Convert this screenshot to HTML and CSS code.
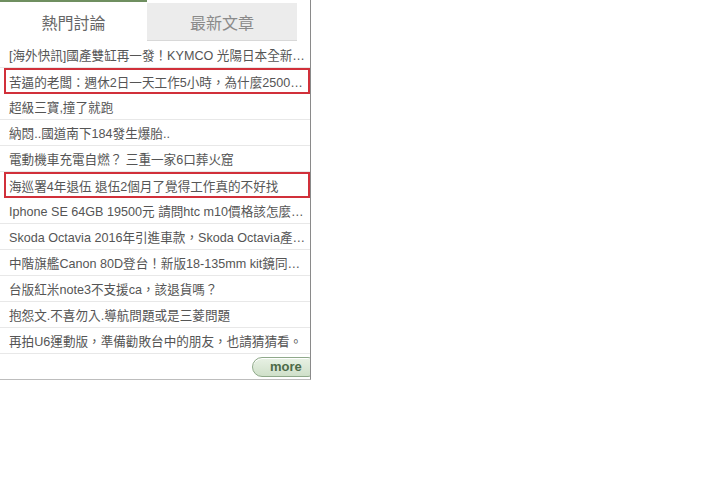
FILE: index.html
```html
<!DOCTYPE html>
<html lang="zh-Hant">
<head>
<meta charset="utf-8">
<link rel="stylesheet" href="styles.css">
</head>
<body>
<div class="box">
  <div class="tabs">
    <div class="tab active">熱門討論</div>
    <div class="tab">最新文章</div>
  </div>
  <ul class="list">
    <li><span>[海外快訊]國產雙缸再一發！KYMCO 光陽日本全新…</span></li>
    <li class="mark"><span>苦逼的老闆：週休2日一天工作5小時，為什麼2500…</span></li>
    <li><span>超級三寶,撞了就跑</span></li>
    <li><span>納悶..國道南下184發生爆胎..</span></li>
    <li><span>電動機車充電自燃？ 三重一家6口葬火窟</span></li>
    <li class="mark"><span>海巡署4年退伍 退伍2個月了覺得工作真的不好找</span></li>
    <li><span>Iphone SE 64GB 19500元 請問htc m10價格該怎麼…</span></li>
    <li><span>Skoda Octavia 2016年引進車款，Skoda Octavia產…</span></li>
    <li><span>中階旗艦Canon 80D登台！新版18-135mm kit鏡同…</span></li>
    <li><span>台版紅米note3不支援ca，該退貨嗎？</span></li>
    <li><span>抱怨文.不喜勿入.導航問題或是三菱問題</span></li>
    <li><span>再拍U6運動版，準備勸敗台中的朋友，也請猜猜看。</span></li>
  </ul>
  <div class="foot"><a class="more" href="#">more</a></div>
</div>
</body>
</html>
```
FILE: styles.css
```css
html, body {
  margin: 0;
  padding: 0;
  background: #fff;
}
body {
  font-family: "Liberation Sans", "Noto Sans CJK TC", sans-serif;
}
.box {
  width: 310px;
  border-right: 1px solid #8a8a8a;
  border-bottom: 1px solid #bdbdbd;
}
.tabs {
  display: flex;
  height: 42px;
}
.tab {
  font-size: 16px;
  display: flex;
  align-items: center;
  justify-content: center;
}
.tab.active {
  width: 147px;
  border-top: 2px solid #6f8f60;
  color: #666;
  height: 40px;
  padding-top: 2px;
  box-sizing: border-box;
}
.tab:not(.active) {
  width: 150px;
  margin-top: 3px;
  height: 37px;
  background: #ececec;
  color: #8a8a8a;
  border-bottom: 1px solid #d8d8d8;
  box-sizing: content-box;
}
.list {
  list-style: none;
  margin: 0;
  padding: 0;
}
.list li {
  height: 26px;
  box-sizing: border-box;
  border-bottom: 1px solid #e8e8e8;
  display: flex;
  align-items: center;
  padding: 0 0 0 9px;
  font-size: 12.6px;
  color: #555;
  white-space: nowrap;
}
.list li.mark {
  margin-left: 4px;
  border: 2px solid #d1303a;
  padding-left: 3px;
}
.foot {
  height: 25px;
  display: flex;
  justify-content: flex-end;
  align-items: center;
  overflow: hidden;
}
.more {
  display: block;
  width: 66px;
  margin-right: -8px;
  height: 20px;
  line-height: 18px;
  border: 1px solid #8fa98a;
  border-radius: 10px;
  background: linear-gradient(#e8f1e4, #cfe0c9);
  color: #4d6a48;
  font-weight: bold;
  font-size: 13px;
  text-decoration: none;
  box-sizing: border-box;
  text-align: left;
  padding-left: 17px;
  box-shadow: inset 0 1px 0 #fff;
}
```
